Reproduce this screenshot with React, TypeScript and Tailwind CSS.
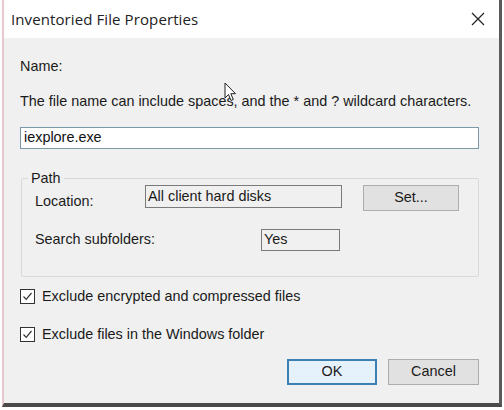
import { FC } from "react";

const font = { fontFamily: '"Liberation Sans", Arial, sans-serif' };

const Check: FC<{ label: string }> = ({ label }) => (
  <div className="flex items-center gap-[7px]">
    <div className="w-[15px] h-[15px] border border-[#333] bg-white flex items-center justify-center">
      <svg width="11" height="11" viewBox="0 0 11 11">
        <path d="M1.5 5.5 L4.2 8.3 L9.5 2" fill="none" stroke="#333" strokeWidth="1.2" />
      </svg>
    </div>
    <span className="text-[14.4px] text-[#1a1a1a]">{label}</span>
  </div>
);

export default function App() {
  return (
    <div className="relative w-[504px] h-[410px] bg-white" style={font}>
      <div className="ml-[2px] w-[500px] h-[407px] border-l-2 border-l-[#e8c8cc] border-r-[3px] border-r-[#5a5a5a] border-b-[4px] border-b-[#4a4a4a] flex flex-col">
        <div className="h-[38px] bg-white flex items-center justify-between pl-[7px] pr-[14px] shrink-0">
          <span className="text-[15px] text-[#222] tracking-[0.1px]" style={{ fontFamily: '"Open Sans", "Noto Sans", sans-serif' }}>
            Inventoried File Properties
          </span>
          <svg width="14" height="14" viewBox="0 0 14 14">
            <path d="M1 1 L13 13 M13 1 L1 13" stroke="#222" strokeWidth="1.2" />
          </svg>
        </div>
        <div className="flex-1 bg-[#f0f0f0] pl-[16px] pr-[20px] pt-[19px] flex flex-col text-[14.4px]">
          <div className="text-[#1a1a1a] leading-[18px]">Name:</div>
          <div className="text-[#1a1a1a] leading-[18px] mt-[17px]">
            The file name can include spaces, and the * and ? wildcard characters.
          </div>
          <div className="mt-[17px] h-[22px] border border-[#7a9aa8] bg-white flex items-center pl-[3px] text-[#111]">
            iexplore.exe
          </div>
          <div className="relative mt-[29px] h-[99px] border border-[#d9d9d9] rounded-[2px] ml-[1px]">
            <span className="absolute -top-[10px] left-[6px] bg-[#f0f0f0] px-[3px] text-[#1a1a1a] leading-[18px]">
              Path
            </span>
            <div className="flex flex-col pl-[13px] pt-[6px]">
              <div className="flex items-start">
                <span className="w-[110px] text-[#1a1a1a] mt-[6px]">Location:</span>
                <div className="w-[197px] h-[23px] border border-[#7a7a7a] flex items-center pl-[2px] text-[#1a1a1a]">
                  All client hard disks
                </div>
                <div className="ml-[21px] w-[96px] h-[26px] border border-[#adadad] bg-[#e1e1e1] flex items-center justify-center text-[#1a1a1a]">
                  Set...
                </div>
              </div>
              <div className="flex items-center mt-[16px]">
                <span className="w-[226px] text-[#1a1a1a]">Search subfolders:</span>
                <div className="w-[79px] h-[22px] border border-[#7a7a7a] flex items-center pl-[2px] text-[#1a1a1a]">
                  Yes
                </div>
              </div>
            </div>
          </div>
          <div className="mt-[9px] flex flex-col gap-[16px]">
            <Check label="Exclude encrypted and compressed files" />
            <Check label="Exclude files in the Windows folder" />
          </div>
          <div className="flex justify-end gap-[11px] mt-[14px]">
            <div className="w-[90px] h-[26px] border-2 border-[#3c7fb1] bg-[#e5f1fb] flex items-center justify-center text-[#1a1a1a]">
              OK
            </div>
            <div className="w-[91px] h-[26px] border border-[#adadad] bg-[#e1e1e1] flex items-center justify-center text-[#1a1a1a]">
              Cancel
            </div>
          </div>
        </div>
      </div>
      <svg className="absolute left-[224px] top-[82px]" width="13" height="20" viewBox="0 0 13 20">
        <path d="M1 1 L1 16 L4.5 12.5 L7 18.5 L9.3 17.5 L6.8 11.7 L11.5 11.7 Z" fill="#fff" stroke="#222" strokeWidth="1" strokeLinejoin="round" />
      </svg>
    </div>
  );
}
